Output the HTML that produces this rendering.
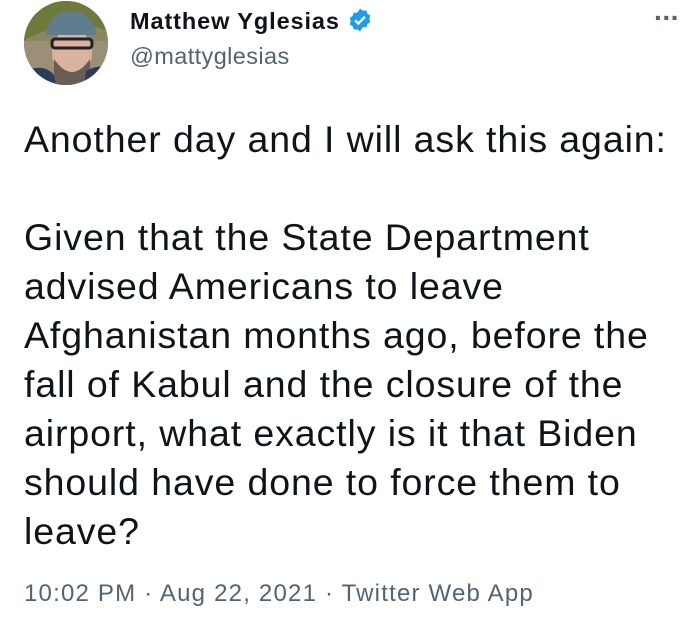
<!DOCTYPE html>
<html><head><meta charset="utf-8"><style>
body{margin:0;width:691px;height:620px;background:#fff;overflow:hidden;font-family:"Liberation Sans",sans-serif;position:relative}
.av{position:absolute;left:24px;top:1px;width:84px;height:84px;border-radius:50%;overflow:hidden;background:#7a7a5a}
.name{position:absolute;left:130px;top:7px;font-weight:bold;font-size:23.5px;letter-spacing:0.9px;color:#0f1419;white-space:nowrap}
.handle{position:absolute;left:130px;top:43px;font-size:23.5px;letter-spacing:0.4px;color:#536471}
.dots{position:absolute;left:654px;top:2px;font-size:28px;font-weight:bold;color:#536471;letter-spacing:-1px}
.body{position:absolute;left:24px;top:115px;font-size:37.5px;letter-spacing:0.9px;line-height:49px;color:#0f1419;white-space:nowrap}
.foot{position:absolute;left:24px;top:580px;font-size:24px;letter-spacing:1.2px;color:#536471;white-space:nowrap}
</style></head><body>
<div class="av"><svg width="84" height="84" viewBox="0 0 84 84">
<rect width="84" height="84" fill="#8a8660"/>
<rect x="0" y="40" width="84" height="44" fill="#9c8f78"/>
<path d="M0 0H84V30Q60 20 40 25Q15 30 0 40Z" fill="#6e7a3c"/>
<ellipse cx="48" cy="52" rx="20" ry="24" fill="#d9b3a0"/>
<path d="M22 34Q26 10 48 10Q70 12 72 34Z" fill="#5f7d8c"/>
<rect x="28" y="38" width="40" height="9" rx="3" fill="none" stroke="#222" stroke-width="3"/>
<path d="M30 58Q48 84 66 58V84H30Z" fill="#6b5d54"/>
<path d="M0 70Q20 62 30 74L32 84H0Z" fill="#2e3c5c"/>
<path d="M62 70Q72 64 84 66V84H60Z" fill="#2e3c5c"/>
</svg></div>
<div class="name">Matthew Yglesias <svg width="26" height="26" viewBox="0 0 24 24" style="vertical-align:-4px;margin-left:0"><path d="M12 1.5l2.6 1.9 3.2-.2 1 3 2.7 1.8-1 3 1 3-2.7 1.8-1 3-3.2-.2L12 22.5l-2.6-1.9-3.2.2-1-3-2.7-1.8 1-3-1-3 2.7-1.8 1-3 3.2.2z" fill="#1d9bf0"/><path d="M7.5 12.3l3 3 6-6.3" fill="none" stroke="#fff" stroke-width="2.2"/></svg></div>
<div class="handle">@mattyglesias</div>
<div class="dots">···</div>
<div class="body">Another day and I will ask this again:<br><br>Given that the State Department<br>advised Americans to leave<br>Afghanistan months ago, before the<br>fall of Kabul and the closure of the<br>airport, what exactly is it that Biden<br>should have done to force them to<br>leave?</div>
<div class="foot">10:02 PM · Aug 22, 2021 · Twitter Web App</div>
</body></html>
